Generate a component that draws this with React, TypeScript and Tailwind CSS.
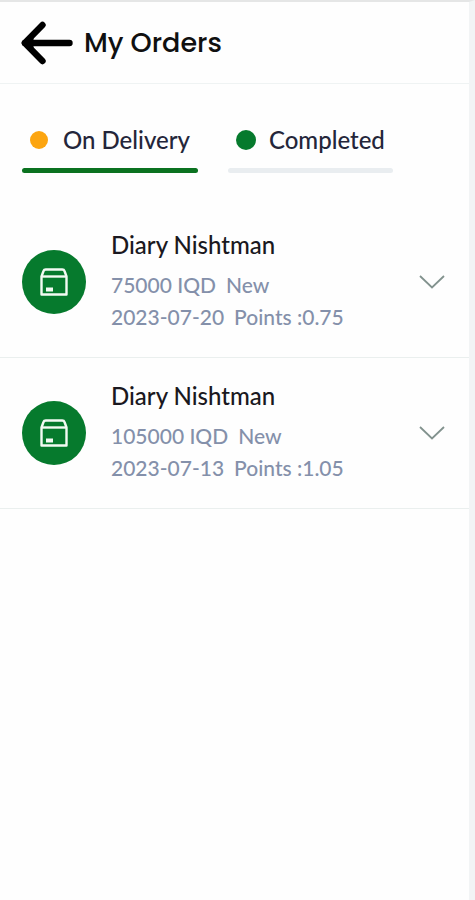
import { useState } from 'react';

type Status = 'delivery' | 'completed';

interface Order {
  id: number;
  customer: string;
  price: number;
  state: string;
  date: string;
  points: string;
}

const orders: Order[] = [
  { id: 1, customer: 'Diary Nishtman', price: 75000, state: 'New', date: '2023-07-20', points: '0.75' },
  { id: 2, customer: 'Diary Nishtman', price: 105000, state: 'New', date: '2023-07-13', points: '1.05' },
];

function ArrowLeft() {
  return (
    <svg width="52" height="44" viewBox="0 0 52 44" fill="none" stroke="#000" strokeLinecap="round" strokeLinejoin="round">
      <path d="M4 22H48.5" strokeWidth="6.4" />
      <path d="M21.5 4L3.8 22L21.5 40" strokeWidth="6.4" />
      <path d="M4 22L12 13.5V30.5Z" fill="#000" strokeWidth="1" />
    </svg>
  );
}

function BoxIcon() {
  return (
    <svg width="28" height="28" viewBox="0 0 28 28" fill="none" stroke="#f3fbf3" strokeWidth="2.4" strokeLinejoin="round">
      <path d="M1.5 8.5V26.5H26.5V8.5L24.5 3Q24 1.5 22.3 1.5H5.7Q4 1.5 3.5 3Z" />
      <path d="M1.5 8.5H26.5" />
      <rect x="6" y="19.5" width="7" height="4" fill="#f3fbf3" stroke="none" />
    </svg>
  );
}

function ChevronDown() {
  return (
    <svg width="26" height="14" viewBox="0 0 26 14" fill="none" stroke="#82928e" strokeWidth="1.8">
      <path d="M1 1L13 12.5L25 1" />
    </svg>
  );
}

function OrderRow({ order }: { order: Order }) {
  return (
    <li className="flex items-center border-b border-[#eaefee] pt-4 pr-6 pb-6 pl-[22px]">
      <div className="mt-2 flex h-16 w-16 shrink-0 items-center justify-center rounded-full bg-[#067a2d]">
        <BoxIcon />
      </div>
      <div className="ml-[25px] flex-1 whitespace-nowrap text-[#8490aa]">
        <h2 className="mb-0.5 text-2xl leading-[44px] font-medium text-[#1a1820]">{order.customer}</h2>
        <p className="flex gap-2.5 text-[21px] leading-8 font-medium">
          <span>{order.price} IQD</span>
          <span>{order.state}</span>
        </p>
        <p className="flex gap-2.5 text-[21px] leading-8 font-medium">
          <span>{order.date}</span>
          <span>Points :{order.points}</span>
        </p>
      </div>
      <button type="button" aria-label="Show order details" className="mt-2 cursor-pointer">
        <ChevronDown />
      </button>
    </li>
  );
}

export default function App() {
  const [status, setStatus] = useState<Status>('delivery');

  return (
    <div className="min-h-screen border-t-2 border-r-6 border-t-[#e5e6e6] border-r-[#f2f4f5] bg-[#fefefe] font-['Lato',sans-serif]">
      <header className="flex h-[82px] items-center gap-[11px] border-b border-[#eff3f3] pl-[21px]">
        <button type="button" aria-label="Back" className="cursor-pointer">
          <ArrowLeft />
        </button>
        <h1 className="font-['Poppins','Inter',sans-serif] text-[27px] leading-8 font-medium text-[#101010]">My Orders</h1>
      </header>

      <nav className="flex gap-[30px] px-[22px] pt-10">
        <button
          type="button"
          aria-pressed={status === 'delivery'}
          onClick={() => setStatus('delivery')}
          className="flex cursor-pointer flex-col text-2xl leading-8 font-medium text-[#24263a]"
        >
          <span className="flex items-center gap-[15px] px-2 pb-3">
            <span className="h-[18px] w-[18px] rounded-full bg-[#fca510]" />
            On Delivery
          </span>
          <span className={`h-[5px] w-full rounded-full ${status === 'delivery' ? 'bg-[#0b7220]' : 'bg-[#e9edf0]'}`} />
        </button>
        <button
          type="button"
          aria-pressed={status === 'completed'}
          onClick={() => setStatus('completed')}
          className="flex cursor-pointer flex-col text-2xl leading-8 font-medium text-[#24263a]"
        >
          <span className="flex items-center gap-[13px] px-2 pb-3">
            <span className="h-5 w-5 rounded-full bg-[#067a2d]" />
            Completed
          </span>
          <span className={`h-[5px] w-full rounded-full ${status === 'completed' ? 'bg-[#0b7220]' : 'bg-[#e9edf0]'}`} />
        </button>
      </nav>

      <ul className="mt-[34px]">
        {orders.map((order) => (
          <OrderRow key={order.id} order={order} />
        ))}
      </ul>
    </div>
  );
}
